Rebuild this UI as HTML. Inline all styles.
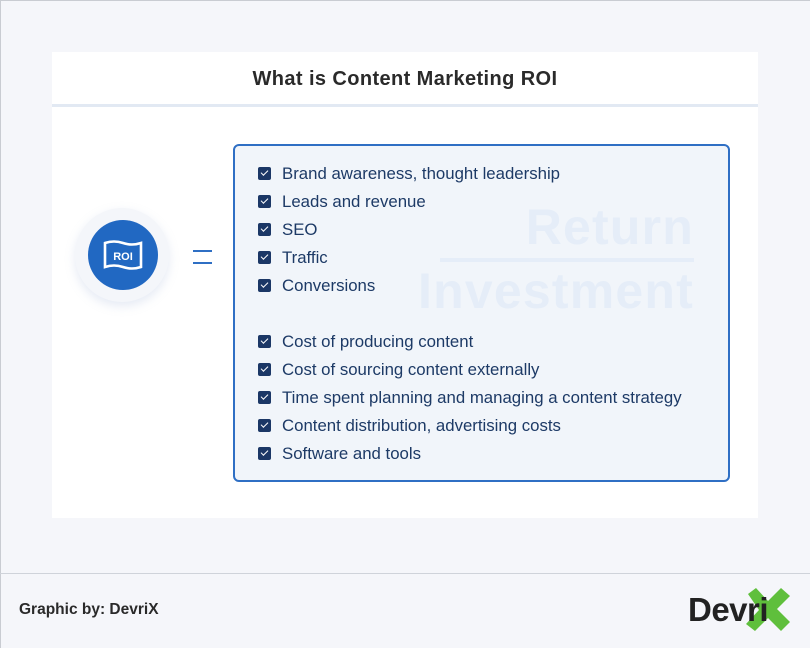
<!DOCTYPE html>
<html><head><style>
body{margin:0;width:810px;height:648px;background:#f5f6fa;font-family:"Liberation Sans",sans-serif;position:relative;overflow:hidden}
.frame{position:absolute;left:0;top:0;width:809px;height:647px;border:1px solid #c9ccd2;border-width:1px 0 0 1px}
.card{position:absolute;left:52px;top:52px;width:706px;height:466px;background:#fff}
.hd{height:52px;border-bottom:3px solid #e2e9f3;text-align:center;line-height:54px;font-weight:bold;font-size:20px;letter-spacing:0.4px;color:#2a2a2a}
.box{position:absolute;left:233px;top:144px;width:493px;height:334px;border:2px solid #2f6fc4;border-radius:6px;background:#f1f5fa;overflow:hidden}
.wm{position:absolute;right:34px;font-weight:bold;color:#e5edf8;font-size:50px;letter-spacing:1.2px}
.it{position:absolute;left:23px;font-size:16.8px;color:#1d3a66;height:20px;line-height:20px}
.it i{position:absolute;left:0;top:3px;width:13px;height:13px;background:#1b3766;border-radius:2px}
.it i:after{content:"";position:absolute;left:3px;top:3px;width:6px;height:3px;border-left:1.6px solid #fff;border-bottom:1.6px solid #fff;transform:rotate(-45deg)}
.it span{margin-left:24px}
.foot{position:absolute;left:0;top:573px;width:810px;height:1px;background:#cfd3da}
</style></head><body>
<div class="frame"></div>
<div class="card"><div class="hd">What is Content Marketing ROI</div></div>
<div style="position:absolute;left:75px;top:208px;width:94px;height:94px;border-radius:50%;background:#f4f6fa;box-shadow:0 4px 10px rgba(150,170,210,.25)"></div>
<div style="position:absolute;left:88px;top:220px;width:70px;height:70px;border-radius:50%;background:#2168c2"></div>
<svg style="position:absolute;left:102px;top:238px" width="42" height="34" viewBox="0 0 42 34"><path d="M3 5 Q12 2 21 5 Q30 8 39 5 L39 29 Q30 32 21 29 Q12 26 3 29 Z" fill="none" stroke="#fff" stroke-width="2.6"/><text x="21" y="22" text-anchor="middle" font-family="Liberation Sans" font-weight="bold" font-size="11" fill="#fff">ROI</text></svg>
<div style="position:absolute;left:193px;top:250px;width:19px;height:2px;background:#2f6fc4"></div>
<div style="position:absolute;left:193px;top:262px;width:19px;height:2px;background:#2f6fc4"></div>
<div class="box">
<div class="wm" style="top:52px">Return</div>
<div style="position:absolute;left:205px;right:34px;top:112px;height:4px;background:#e5edf8"></div>
<div class="wm" style="top:116px">Investment</div>
<div class="it" style="top:18px"><i></i><span>Brand awareness, thought leadership</span></div>
<div class="it" style="top:46px"><i></i><span>Leads and revenue</span></div>
<div class="it" style="top:74px"><i></i><span>SEO</span></div>
<div class="it" style="top:102px"><i></i><span>Traffic</span></div>
<div class="it" style="top:130px"><i></i><span>Conversions</span></div>
<div class="it" style="top:186px"><i></i><span>Cost of producing content</span></div>
<div class="it" style="top:214px"><i></i><span>Cost of sourcing content externally</span></div>
<div class="it" style="top:242px"><i></i><span>Time spent planning and managing a content strategy</span></div>
<div class="it" style="top:270px"><i></i><span>Content distribution, advertising costs</span></div>
<div class="it" style="top:298px"><i></i><span>Software and tools</span></div>
</div>
<div class="foot"></div>
<div style="position:absolute;left:19px;top:601px;font-size:15.5px;font-weight:bold;color:#2a2a2a">Graphic by: DevriX</div>
<svg style="position:absolute;left:744px;top:588px" width="48" height="44" viewBox="0 0 48 44"><path d="M4 6 L12 0 L24 13 L37 0 L46 8 L33 21 L46 34 L37 43 L24 30 L11 43 L2 36 L15 22 Z" fill="#5fbf3c"/></svg>
<div style="position:absolute;left:688px;top:591px;font-size:33px;font-weight:bold;color:#222;letter-spacing:-0.5px">Devri</div>
</body></html>
